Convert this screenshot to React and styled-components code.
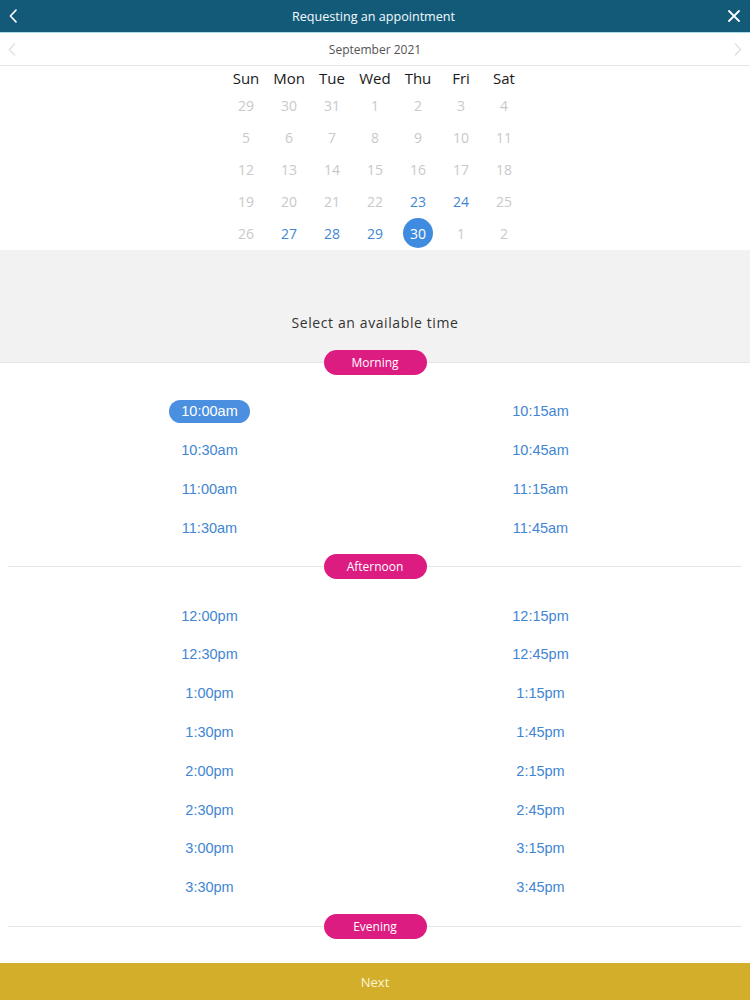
import React from "react";
import styled, { createGlobalStyle } from "styled-components";

const Global = createGlobalStyle`
  html, body { margin: 0; padding: 0; background: #fff; }
  body { font-family: "Open Sans", "Noto Sans", sans-serif; }
  * { box-sizing: border-box; }
`;

const Page = styled.div`
  height: 100vh;
  display: flex;
  flex-direction: column;
  overflow: hidden;
`;

const TopBar = styled.header`
  flex: 0 0 auto;
  height: 33px;
  background: #135a79;
  border-bottom: 1px solid #a6dbe9;
  display: flex;
  align-items: center;
  justify-content: space-between;
  padding: 0 9px 0 6px;
  color: #fff;
`;

const TopTitle = styled.div`
  font-size: 12.6px;
  color: #f4fbff;
`;

const IconButton = styled.button`
  background: none;
  border: 0;
  padding: 0;
  width: 14px;
  height: 16px;
  display: flex;
  align-items: center;
  justify-content: center;
  cursor: pointer;
`;

const Scroll = styled.main`
  flex: 1 1 auto;
  overflow: hidden;
`;

const MonthBar = styled.div`
  height: 33px;
  border-bottom: 1px solid #e6e6e6;
  display: flex;
  align-items: center;
  justify-content: space-between;
  padding: 0 8px;
`;

const MonthLabel = styled.div`
  font-size: 12px;
  color: #545454;
`;

const CalGrid = styled.div`
  width: 301px;
  margin: 0 auto;
  display: grid;
  grid-template-columns: repeat(7, 43px);
  grid-template-rows: 23px repeat(5, 32px);
  padding-bottom: 1px;
`;

const DayName = styled.div`
  display: flex;
  align-items: center;
  justify-content: center;
  font-size: 15px;
  color: #1a1a1a;
`;

const DateCell = styled.div`
  display: flex;
  align-items: center;
  justify-content: center;
`;

const DateNum = styled.span`
  width: 30px;
  height: 30px;
  border-radius: 50%;
  display: flex;
  align-items: center;
  justify-content: center;
  font-size: 14px;
  color: ${(p) => (p.$selected ? "#fff" : p.$available ? "#3f86d3" : "#c9c9c9")};
  background: ${(p) => (p.$selected ? "#3f8be0" : "transparent")};
`;

const Prompt = styled.div`
  background: #f3f2f3;
  height: 100px;
  display: flex;
  align-items: flex-end;
  justify-content: center;
  padding-bottom: 18px;
  font-size: 14px;
  letter-spacing: 0.6px;
  color: #333;
`;

const Divider = styled.div`
  height: 25px;
  display: flex;
  justify-content: center;
  align-items: center;
  background: ${(p) =>
    p.$top
      ? "linear-gradient(to bottom, #f3f2f3 0, #f3f2f3 12px, #e6e6e6 12px, #e6e6e6 13px, #fff 13px)"
      : "linear-gradient(to bottom, transparent 12px, #e6e6e6 12px, #e6e6e6 13px, transparent 13px)"};
  margin: ${(p) => (p.$top ? "0" : "0 8px")};
`;

const Pill = styled.div`
  width: 103px;
  height: 25px;
  border-radius: 13px;
  background: #dd1c82;
  color: #fff;
  font-size: 12px;
  display: flex;
  align-items: center;
  justify-content: center;
`;

const Slots = styled.div`
  display: grid;
  grid-template-columns: 1fr 1fr;
  grid-auto-rows: 38.8px;
  padding: 17px 44px 7px;
`;

const SlotCell = styled.div`
  display: flex;
  align-items: center;
  justify-content: center;
`;

const Slot = styled.span`
  font-family: "Liberation Sans", Arial, sans-serif;
  font-size: 14.5px;
  height: 23px;
  padding: 0 12px;
  border-radius: 12px;
  display: flex;
  align-items: center;
  color: ${(p) => (p.$selected ? "#fff" : "#3f86d3")};
  background: ${(p) => (p.$selected ? "#4a8fe0" : "transparent")};
`;

const Footer = styled.button`
  flex: 0 0 37px;
  border: 0;
  background: #d2ae2a;
  color: #fdf6d8;
  font-family: "Open Sans", sans-serif;
  font-size: 13px;
  width: 100%;
  cursor: pointer;
`;

const Chevron = ({ dir = "left", color = "#fff", size = 14 }) => (
  <svg width={size * 0.6} height={size} viewBox="0 0 6 10" fill="none">
    <path
      d={dir === "left" ? "M5 0.8 L1 5 L5 9.2" : "M1 0.8 L5 5 L1 9.2"}
      stroke={color}
      strokeWidth="1.1"
      strokeLinecap="round"
      strokeLinejoin="round"
    />
  </svg>
);

const Cross = () => (
  <svg width="12" height="12" viewBox="0 0 12 12">
    <path d="M1 1 L11 11 M11 1 L1 11" stroke="#fff" strokeWidth="1.8" strokeLinecap="round" />
  </svg>
);

const days = ["Sun", "Mon", "Tue", "Wed", "Thu", "Fri", "Sat"];
const dates = [
  29, 30, 31, 1, 2, 3, 4,
  5, 6, 7, 8, 9, 10, 11,
  12, 13, 14, 15, 16, 17, 18,
  19, 20, 21, 22, 23, 24, 25,
  26, 27, 28, 29, 30, 1, 2,
];
const availableIdx = new Set([25, 26, 29, 30, 31]);
const selectedIdx = 32;

const morning = ["10:00am", "10:15am", "10:30am", "10:45am", "11:00am", "11:15am", "11:30am", "11:45am"];
const afternoon = [
  "12:00pm", "12:15pm", "12:30pm", "12:45pm", "1:00pm", "1:15pm", "1:30pm", "1:45pm",
  "2:00pm", "2:15pm", "2:30pm", "2:45pm", "3:00pm", "3:15pm", "3:30pm", "3:45pm",
];

export default function App() {
  return (
    <Page>
      <Global />
      <TopBar>
        <IconButton aria-label="Back">
          <Chevron dir="left" color="#fff" size={14} />
        </IconButton>
        <TopTitle>Requesting an appointment</TopTitle>
        <IconButton aria-label="Close">
          <Cross />
        </IconButton>
      </TopBar>
      <Scroll>
        <MonthBar>
          <Chevron dir="left" color="#e2e2e2" size={13} />
          <MonthLabel>September 2021</MonthLabel>
          <Chevron dir="right" color="#e2e2e2" size={13} />
        </MonthBar>
        <CalGrid>
          {days.map((d) => (
            <DayName key={d}>{d}</DayName>
          ))}
          {dates.map((n, i) => (
            <DateCell key={i}>
              <DateNum $available={availableIdx.has(i)} $selected={i === selectedIdx}>
                {n}
              </DateNum>
            </DateCell>
          ))}
        </CalGrid>
        <Prompt>Select an available time</Prompt>
        <Divider $top>
          <Pill>Morning</Pill>
        </Divider>
        <Slots>
          {morning.map((t, i) => (
            <SlotCell key={t}>
              <Slot $selected={i === 0}>{t}</Slot>
            </SlotCell>
          ))}
        </Slots>
        <Divider>
          <Pill>Afternoon</Pill>
        </Divider>
        <Slots>
          {afternoon.map((t) => (
            <SlotCell key={t}>
              <Slot>{t}</Slot>
            </SlotCell>
          ))}
        </Slots>
        <Divider>
          <Pill>Evening</Pill>
        </Divider>
      </Scroll>
      <Footer>Next</Footer>
    </Page>
  );
}
